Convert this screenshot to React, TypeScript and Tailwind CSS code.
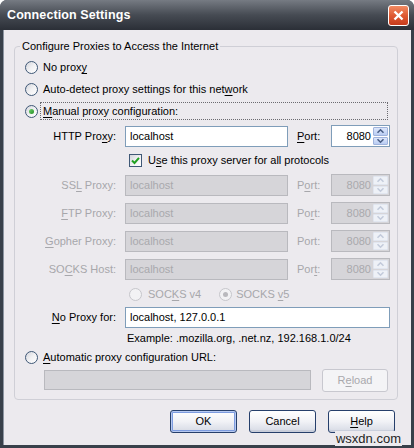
import React from 'react';

// Windows XP style "Connection Settings" dialog

function Key({ children }: { children: React.ReactNode }) {
  return <span className="underline underline-offset-[2px]">{children}</span>;
}

function Radio({ checked = false, disabled = false }: { checked?: boolean; disabled?: boolean }) {
  return (
    <span
      className={
        'w-[13px] h-[13px] shrink-0 rounded-full border flex items-center justify-center ' +
        (disabled
          ? 'border-[#c6c6cb] bg-[#f2f2f4]'
          : 'border-[#3f5876] bg-linear-to-br from-[#d3d5db] via-[#f1f1f3] to-white')
      }
    >
      {checked && (
        <span
          className={
            'w-[5px] h-[5px] rounded-full ' +
            (disabled ? 'bg-[#b9b9bd]' : 'bg-[#2fa52f] bg-linear-to-br from-[#6fd06f] to-[#1f8f1f]')
          }
        />
      )}
    </span>
  );
}

function Checkbox() {
  return (
    <span className="w-[13px] h-[13px] shrink-0 border border-[#3f5876] bg-linear-to-br from-[#d3d5db] via-[#f1f1f3] to-white flex items-center justify-center">
      <svg width="11" height="11" viewBox="0 0 11 11">
        <path d="M2 5.5 L4.5 8 L9 2.8" fill="none" stroke="#21a121" strokeWidth="2" />
      </svg>
    </span>
  );
}

function Arrow({ up, color }: { up: boolean; color: string }) {
  return (
    <svg width="9" height="6" viewBox="0 0 9 6">
      <path
        d={up ? 'M1.5 4.8 L4.5 1.8 L7.5 4.8' : 'M1.5 1.2 L4.5 4.2 L7.5 1.2'}
        fill="none"
        stroke={color}
        strokeWidth="1.6"
      />
    </svg>
  );
}

function PortBox({ disabled = false }: { disabled?: boolean }) {
  const btn = disabled
    ? 'border-[#e1e6f0] bg-[#eef1f7]'
    : 'border-[#9fb3dc] bg-linear-to-b from-[#dce6fb] to-[#b9ccf2]';
  const arrow = disabled ? '#c3cbdb' : '#4a5f86';
  return (
    <div
      className={
        'w-[59px] h-[22px] border flex ' +
        (disabled ? 'border-[#b9b9be] bg-[#d6d5d9] text-[#a9a9ad]' : 'border-[#7f9db9] bg-white')
      }
    >
      <div className="flex-1 flex items-center justify-end pr-[2px]">8080</div>
      <div className="w-[15px] flex flex-col gap-[1px] py-[1px] mr-[1px]">
        <div className={'flex-1 border rounded-[1px] flex items-center justify-center ' + btn}>
          <Arrow up color={arrow} />
        </div>
        <div className={'flex-1 border rounded-[1px] flex items-center justify-center ' + btn}>
          <Arrow up={false} color={arrow} />
        </div>
      </div>
    </div>
  );
}

function TextBox({ value, width, disabled = false }: { value: string; width: string; disabled?: boolean }) {
  return (
    <div
      className={
        width +
        ' h-[21px] border flex items-center pl-[4px] ' +
        (disabled ? 'border-[#b9b9be] bg-[#d6d5d9] text-[#a9a9ad]' : 'border-[#7f9db9] bg-white')
      }
    >
      {value}
    </div>
  );
}

function ProxyRow({
  label,
  port,
  disabled = false,
}: {
  label: React.ReactNode;
  port: React.ReactNode;
  disabled?: boolean;
}) {
  return (
    <div className={'h-[28px] flex items-center ' + (disabled ? 'text-[#a7a7ab]' : '')}>
      <div className="w-[101px] text-right">{label}</div>
      <div className="ml-[9px]">
        <TextBox value="localhost" width="w-[163px]" disabled={disabled} />
      </div>
      <div className="ml-[9px] w-[34px]">{port}</div>
      <PortBox disabled={disabled} />
    </div>
  );
}

function Button({ children, isDefault = false }: { children: React.ReactNode; isDefault?: boolean }) {
  return (
    <button
      className={
        'w-[67px] h-[23px] rounded-[3px] border border-[#263f6b] bg-linear-to-b from-white via-[#f1f2f6] to-[#d5d9e4] flex items-center justify-center ' +
        (isDefault ? 'shadow-[inset_0_0_0_1px_#b7c9f0,inset_0_0_0_2px_#7d9ce0]' : 'shadow-[inset_0_-2px_0_#c9cedb]')
      }
    >
      {children}
    </button>
  );
}

export default function App() {
  return (
    <div className="w-[414px] h-[448px] relative flex flex-col bg-[#38404a] rounded-t-[7px] overflow-hidden font-['Liberation_Sans',Arial,sans-serif] text-[11px] text-black">
      {/* Title bar */}
      <div className="h-[30px] shrink-0 flex items-center justify-between pl-[7px] pr-[5px] bg-linear-to-b from-[#767b83] via-[#464b53] to-[#2b2f37]">
        <span className="text-white font-bold text-[12.5px] tracking-[0.1px]">Connection Settings</span>
        <div className="w-[21px] h-[21px] rounded-[3px] border border-white bg-[#d9572f] bg-linear-to-b from-[#f08a62] via-[#df5a33] to-[#c63b1c] flex items-center justify-center">
          <svg width="13" height="13" viewBox="0 0 13 13">
            <path d="M2.5 2.5 L10.5 10.5 M10.5 2.5 L2.5 10.5" stroke="white" strokeWidth="2.4" />
          </svg>
        </div>
      </div>

      {/* Body */}
      <div className="flex-1 mx-[3px] mb-[3px] bg-[#eceaee] pt-[10px] border-l border-[#8c95a1]">
        <fieldset className="ml-[10px] mr-[13px] border border-[#cfcfd6] rounded-[4px] pb-[6px]">
          <legend className="ml-[5px] px-[2px] leading-[13px]">Configure Proxies to Access the Internet</legend>

          <div className="h-[21px] mt-[4px] flex items-center pl-[10px] gap-[5px]">
            <Radio />
            <span>
              No prox<Key>y</Key>
            </span>
          </div>
          <div className="h-[22px] flex items-center pl-[10px] gap-[5px]">
            <Radio />
            <span>
              Auto-detect proxy settings for this net<Key>w</Key>ork
            </span>
          </div>
          <div className="h-[22px] flex items-center pl-[10px]">
            <Radio checked />
            <span className="ml-[2px] mr-[9px] flex-1 h-[18px] border border-dotted border-[#6b6b70] pl-[2px] flex items-center">
              <span>
                <Key>M</Key>anual proxy configuration:
              </span>
            </span>
          </div>

          <ProxyRow
            label={
              <>
                HTTP Pro<Key>x</Key>y:
              </>
            }
            port={
              <>
                <Key>P</Key>ort:
              </>
            }
          />

          <div className="h-[21px] flex items-center pl-[114px] gap-[6px]">
            <Checkbox />
            <span>
              U<Key>s</Key>e this proxy server for all protocols
            </span>
          </div>

          <ProxyRow
            disabled
            label={
              <>
                SS<Key>L</Key> Proxy:
              </>
            }
            port={
              <>
                P<Key>o</Key>rt:
              </>
            }
          />
          <ProxyRow
            disabled
            label={
              <>
                <Key>F</Key>TP Proxy:
              </>
            }
            port={
              <>
                Po<Key>r</Key>t:
              </>
            }
          />
          <ProxyRow
            disabled
            label={
              <>
                <Key>G</Key>opher Proxy:
              </>
            }
            port={<>Port:</>}
          />
          <ProxyRow
            disabled
            label={
              <>
                SO<Key>C</Key>KS Host:
              </>
            }
            port={
              <>
                Por<Key>t</Key>:
              </>
            }
          />

          <div className="h-[22px] flex items-center pl-[114px] text-[#a7a7ab]">
            <Radio disabled />
            <span className="ml-[6px]">
              SOC<Key>K</Key>S v4
            </span>
            <span className="ml-[18px]">
              <Radio disabled checked />
            </span>
            <span className="ml-[4px]">
              SOCKS <Key>v</Key>5
            </span>
          </div>

          <div className="h-[24px] flex items-center">
            <div className="w-[101px] text-right">
              <Key>N</Key>o Proxy for:
            </div>
            <div className="ml-[9px]">
              <TextBox value="localhost, 127.0.0.1" width="w-[265px]" />
            </div>
          </div>

          <div className="h-[18px] flex items-center pl-[112px]">Example: .mozilla.org, .net.nz, 192.168.1.0/24</div>

          <div className="h-[20px] flex items-center pl-[10px] gap-[5px]">
            <Radio />
            <span>
              <Key>A</Key>utomatic proxy configuration URL:
            </span>
          </div>

          <div className="h-[26px] flex items-center">
            <div className="ml-[29px] w-[267px] h-[20px] border border-[#b9b9be] bg-[#d6d5d9]" />
            <div className="ml-[11px] w-[66px] h-[23px] rounded-[3px] border border-[#c8c8cf] bg-[#f4f4f6] text-[#a9a9ad] flex items-center justify-center">
              <span>
                R<Key>e</Key>load
              </span>
            </div>
          </div>
        </fieldset>

        <div className="flex justify-end gap-[12px] pr-[16px] mt-[10px]">
          <Button isDefault>OK</Button>
          <Button>Cancel</Button>
          <Button>
            <span>
              <Key>H</Key>elp
            </span>
          </Button>
        </div>
      </div>

      {/* site watermark */}
      <div className="absolute right-[12px] bottom-[2px] text-[13px] leading-[15px] text-[#1e1e1e] bg-[#eceaee] px-[1px]">
        wsxdn.com
      </div>
    </div>
  );
}
